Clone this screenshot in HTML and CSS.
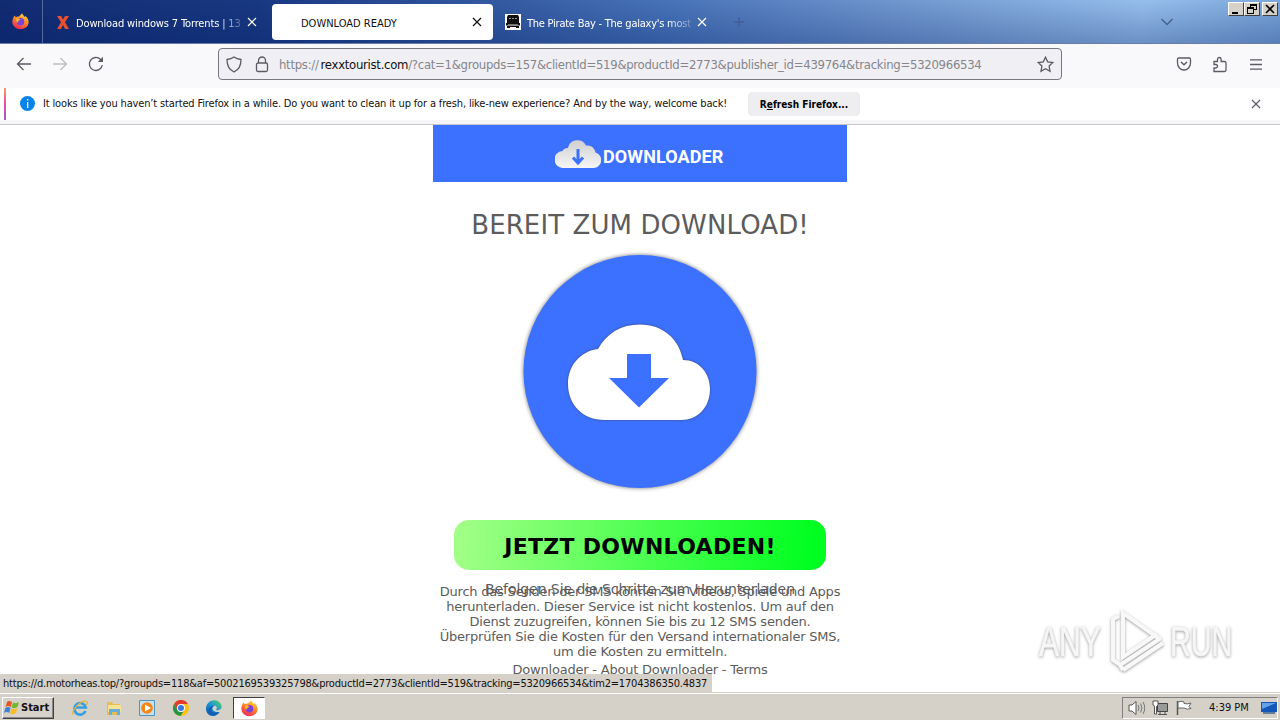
FILE: index.html
```html
<!DOCTYPE html>
<html lang="de">
<head>
<meta charset="utf-8">
<title>DOWNLOAD READY</title>
<link rel="stylesheet" href="styles.css">
</head>
<body>
<svg class="defs" width="0" height="0">
  <defs>
    <linearGradient id="fire" x1=".8" y1="0" x2=".3" y2="1"><stop offset="0" stop-color="#ffe14a"/><stop offset=".45" stop-color="#ff8a22"/><stop offset="1" stop-color="#f0245c"/></linearGradient>
    <linearGradient id="edge" x1="0" y1="1" x2="1" y2="0"><stop offset="0" stop-color="#0c50a8"/><stop offset=".5" stop-color="#1994d8"/><stop offset="1" stop-color="#5ad65c"/></linearGradient>
    <linearGradient id="silver" x1="0" y1="0" x2="0" y2="1"><stop offset="0" stop-color="#cfcfcf"/><stop offset="1" stop-color="#f6f6f6"/></linearGradient>
    <symbol id="firefox" viewBox="0 0 16 16"><path fill="url(#fire)" d="M2.2 2.4 3.7 4C4.4 3.4 5.2 3.2 6 3.5 7 3 7.800 1.800 9.600.2 10 1.800 11.300 2.600 12.100 3.800L12.700 2.800C14.700 4.600 15.900 6.600 15.600 9.300A7.700 6.900 0 0 1 .3 9C.2 6.500 1 4.600 2.200 2.400Z"/><circle cx="8" cy="8.200" r="3.500" fill="#7b42d6"/><path fill="#ffb22b" d="M3.700 5.300C5.200 4.300 7 5 7.900 6.300L6.200 7.400 5.500 9C4.300 8.300 3.400 6.900 3.700 5.300Z"/></symbol>
    <symbol id="x" viewBox="0 0 10 10"><path d="m1 1 8 8M9 1 1 9" fill="none" stroke="currentColor" stroke-width="1.200"/></symbol>
  </defs>
</svg>

<header class="tabs">
  <div class="view"><svg width="17" height="17"><use href="#firefox"/></svg></div>
  <div class="tab tab-a">
    <svg width="12" height="13" viewBox="0 0 12 13"><path d="M0 0h4.200L6 3.600 8 0h4L8 6.300 12 13H8L6 9l-2 4H0l4-6.700Z" fill="#e8502c"/></svg>
    <span class="tab-title fade t1">Download windows 7 Torrents | 13</span>
    <svg class="close" width="10" height="10"><use href="#x"/></svg>
  </div>
  <div class="tab tab-b">
    <span class="tab-title t2">DOWNLOAD READY</span>
    <svg class="close" width="10" height="10"><use href="#x"/></svg>
  </div>
  <div class="tab tab-c">
    <svg width="16" height="16" viewBox="0 0 16 16"><path fill="#fff" d="M0 0h16v16H0z"/><path d="M3 1h10l1 2v6H2V3ZM1 9h14v2.500H1zM2 12h3v2H2zM11 12h3v2h-3zM5 12h6v1H5z" fill="#111"/><path d="M4 4h2v1H4zm3 0h2v1H7zm3 0h2v1h-2zM3 10h10v.7H3z" fill="#999"/></svg>
    <span class="tab-title fade t3">The Pirate Bay - The galaxy's most</span>
    <svg class="close" width="10" height="10"><use href="#x"/></svg>
  </div>
  <svg class="plus" width="10" height="10"><path d="M5 0v10M0 5h10" stroke="#405783"/></svg>
  <svg class="chev" width="12" height="8"><path d="m.5 1 5.500 5.500L11.500 1" fill="none" stroke="#42618f" stroke-width="1.300"/></svg>
  <div class="winbtns">
    <svg width="16" height="14" class="wb"><path d="M4 10h6v2H4z"/></svg>
    <svg width="16" height="14" class="wb"><path d="M6 2h7v6h-3v4H3V5h3zm1 2v1h3v2h2V4zM4 7v4h5V7z" fill-rule="evenodd"/></svg>
    <svg width="16" height="14" class="wb last"><path d="m4 3 8 8M12 3l-8 8" stroke="#000" stroke-width="1.700"/></svg>
  </div>
</header>

<nav class="bar">
  <svg class="back" width="16" height="14" viewBox="0 0 16 14"><path d="M7.500 1 1.500 7l6 6M1.500 7H15"/></svg>
  <svg class="fwd" width="16" height="14" viewBox="0 0 16 14"><path d="m8.500 1 6 6-6 6M14.500 7H1"/></svg>
  <svg class="reload" width="16" height="16" viewBox="0 0 16 16"><path d="M14.300 9A6.500 6.500 0 1 1 12.600 3.500L14 5"/><path d="M15 .8V6H9.800Z" fill="#5b5b66" stroke="none"/></svg>
  <div class="url">
    <svg width="16" height="17" viewBox="0 0 16 17"><path d="M8 1c2 1.500 4.200 2.200 7 2.500.1 5.500-1.800 10-7 12.500C2.800 13.500.9 9 1 3.500 3.800 3.200 6 2.500 8 1Z"/></svg>
    <svg class="lock" width="14" height="17" viewBox="0 0 14 17"><rect x="1.500" y="7" width="11" height="8.500" rx="1.500"/><path d="M3.500 7V4.500a3.500 3.500 0 0 1 7 0V7"/></svg>
    <span class="address">https://<b>rexxtourist.com</b>/?cat=1&amp;groupds=157&amp;clientId=519&amp;productId=2773&amp;publisher_id=439764&amp;tracking=5320966534</span>
    <svg class="star" width="17" height="17" viewBox="0 0 17 17"><path d="m8.500 1.200 2.200 4.700 5.100.6-3.700 3.600.9 5.200-4.500-2.500L4 15.300l.9-5.200L1.200 6.500l5.100-.6Z"/></svg>
  </div>
  <svg class="pocket" width="16" height="14" viewBox="0 0 16 14"><path d="M2.500 1h11Q14.500 1 14.500 2.500V6A6.500 7 0 0 1 1.500 6V2.500Q1.500 1 2.500 1Z"/><path d="m5 5 3 2.800L11 5" stroke-width="1.500"/></svg>
  <svg class="ext" width="16" height="17" viewBox="0 0 16 17"><path d="M2 5.500h3.500V3.300a1.800 1.800 0 0 1 3.600 0v2.200h3.400q1.500 0 1.500 1.500v7q0 1.500-1.500 1.500H2v-3.500h1.800a1.700 1.700 0 0 0 0-3.500H2Z"/></svg>
  <svg class="menu" width="12" height="11"><path d="M0 .8h12M0 5.500h12M0 10.200h12"/></svg>
</nav>

<section class="notice">
  <svg class="info" width="15" height="15"><circle cx="7.500" cy="7.500" r="7.500" fill="#0a84e8"/><path d="M7 3h1.300v1.500H7zM7 6h1.300v6H7z" fill="#fff"/></svg>
  <span class="msg">It looks like you haven’t started Firefox in a while. Do you want to clean it up for a fresh, like-new experience? And by the way, welcome back!</span>
  <button class="refresh"><span>R<u>e</u>fresh Firefox...</span></button>
  <svg class="dismiss" width="10" height="10"><use href="#x"/></svg>
</section>

<main class="page">
  <div class="banner">
    <svg width="46" height="28" viewBox="0 0 46 28"><path d="M8.500 28a8.500 8.500 0 0 1-1-17Q9 8 13 8A9.600 9.600 0 0 1 31 5.500Q38.500 4.500 40.500 12.500A7.900 7.900 0 0 1 38.500 28Z" fill="url(#silver)"/><path d="M23 9v14m-5-5.500 5 5.500 5-5.500" fill="none" stroke="#3c70ff" stroke-width="3"/></svg>
    <span>DOWNLOADER</span>
  </div>
  <h1><span>BEREIT ZUM DOWNLOAD!</span></h1>
  <svg class="circle" width="244" height="244" viewBox="518 250 244 244"><circle cx="640" cy="371.500" r="116.500" fill="#3c70ff"/><path class="cloud" d="M605 420C582 420 568 404 568 384C568 365 581 351 598 349C607 333 621 324.500 640 324.500C663 324.500 679 339 683 360C699 360 710 373 710 389C710 407 698 420 681 420Z"/><path d="M627 354h24v24h18l-30 29.500-30-29.500h18Z" fill="#3c70ff"/></svg>
  <button class="download"><span>JETZT DOWNLOADEN!</span></button>
  <p class="steps"><span>Befolgen Sie die Schritte zum Herunterladen</span></p>
  <p class="terms">Durch das Senden der SMS können Sie Videos, Spiele und Apps<br>herunterladen. Dieser Service ist nicht kostenlos. Um auf den<br>Dienst zuzugreifen, können Sie bis zu 12 SMS senden.<br>Überprüfen Sie die Kosten für den Versand internationaler SMS,<br>um die Kosten zu ermitteln.</p>
  <p class="links">Downloader - About Downloader - Terms</p>
  <div class="watermark">
    <span class="wm">ANY</span>
    <svg width="58" height="66" viewBox="0 0 58 66"><path d="M10 8 4 11v41l6 4M52 32 14 5v44l34-23M14 62l40-27M14 62l-3-5 38-25" /></svg>
    <span class="wm run">RUN</span>
  </div>
  <div class="status"><span>https://d.motorheas.top/?groupds=118&amp;af=5002169539325798&amp;productId=2773&amp;clientId=519&amp;tracking=5320966534&amp;tim2=1704386350.4837</span></div>
</main>

<footer class="taskbar">
  <div class="start"><svg width="16" height="15" viewBox="0 0 16 15"><path d="M3 2Q5 0 8 2L6.800 7Q4 5 1.600 7Z" fill="#e85424"/><path d="M9 2.500q3 1.500 6-.5l-1.500 5q-3 2-6 .5Z" fill="#72b632"/><path d="M1.300 8Q4 6 6.500 8l-1.300 5Q3 11 0 13Z" fill="#3c82d6"/><path d="M7.300 8.500q3 1.500 6-.5L12 13q-3 2-6 .5Z" fill="#f8bc26"/></svg><span>Start</span></div>
  <div class="launch">
    <svg width="16" height="16" viewBox="0 0 16 16"><path d="M13.500 11a5.800 5.800 0 1 1 .3-3.500H4" fill="none" stroke="#369fe0" stroke-width="2.600"/><path d="M1 14.500C-1 11 10-2 15 2q1 1-.5 3" fill="none" stroke="#e7b43b" stroke-width="1.200"/></svg>
    <svg width="16" height="16" viewBox="0 0 16 16"><path d="M1 2h5l1 2h7v11H1z" fill="#e6bd55"/><path d="M2 5h13v7H2z" fill="#f8e394"/><path d="M3 15V9h11v6h-3v-3H6v3Z" fill="#69add8"/></svg>
    <svg width="16" height="16" viewBox="0 0 16 16"><path d="M.5.5h15v15H.5z" fill="#c6e1ee" stroke="#5095bb"/><circle cx="8" cy="8" r="5.800" fill="#f28514"/><path d="m6 4.500 6 3.500-6 3.500Z" fill="#fff"/></svg>
    <svg width="16" height="16" viewBox="0 0 16 16"><circle cx="8" cy="8" r="8" fill="#fbc116"/><path d="M1 4A8 8 0 0 1 15 4H8a4 4 0 0 0-3.500 6Z" fill="#e33b2e"/><path d="M1 4a8 8 0 0 0 6.500 12l3.500-5.500a4 4 0 0 1-6.500-.5Z" fill="#269447"/><circle cx="8" cy="8" r="3.900" fill="#fff"/><circle cx="8" cy="8" r="3" fill="#3478e5"/></svg>
    <svg width="16" height="16" viewBox="0 0 16 16"><path d="M0 9C0-1 13-3 15.500 5.500 16.500 9 13 11 10 10q2-3-1-4.500C5 5 5 13 13.500 12 9 19 0 16 0 9Z" fill="url(#edge)"/><path d="M6 8q-3 6 7.500 4C9 19 0 15 3 8q2-3 6-2.500Q7 6 6 8Z" fill="#1260b4"/></svg>
    <div class="active"><svg width="17" height="17"><use href="#firefox"/></svg></div>
  </div>
  <div class="tray">
    <svg width="17" height="14" viewBox="0 0 17 14"><path d="M1 4h3l4-3.500v13L4 10H1Z" fill="#fff" stroke="#555"/><path d="M10 4q2 3 0 6M12.500 2.500q3 4.500 0 9M15 1q3.500 6 0 12" fill="none" stroke="#777"/></svg>
    <svg width="17" height="16" viewBox="0 0 17 16"><path d="M5.500 3.500h10v8h-10z" fill="#999" stroke="#444"/><path d="M8 11.500v3M13 11.500v3M6 14.500h9" stroke="#555"/><path d="M1 1h5v4L4.500 6.500V14h-2V6L1 5Z" fill="#fff" stroke="#555"/></svg>
    <svg width="17" height="16" viewBox="0 0 17 16"><path d="M1.500 1v14" stroke="#555" stroke-width="1.500"/><path d="M2 2q3-1.500 6 0v1.500q3 1 7-.5l-2 3.500 2 2q-4 1.500-7-.5H2Z" fill="#fff" stroke="#666"/></svg>
    <span class="clock">4:39 PM</span>
    <svg class="desk" width="16" height="13"><path d="M0 1h16v10H0z" fill="#1557b9"/><path d="M1 2h14L1 8Z" fill="#65a2e8"/><path d="M2 11h12v2H2z" fill="#647b9a"/></svg>
  </div>
</footer>
</body>
</html>
```
FILE: styles.css
```css
* { box-sizing: border-box; }
html, body { height: 100%; }
body { margin: 0; display: flex; flex-direction: column; overflow: hidden; background: #fff; color: #111; font: 11px/14px "DejaVu Sans Condensed", "DejaVu Sans", sans-serif; font-stretch: condensed; }
svg { display: block; flex: none; }
.defs { position: absolute; }
span { white-space: nowrap; }

.tabs { height: 44px; flex: none; display: flex; color: #fff; border-bottom: 1px solid #687fa8; background: linear-gradient(to bottom, rgba(130,170,225,.06) 0, rgba(15,45,115,.32) 100%), linear-gradient(100deg, #0b246b 0, #12317b 20%, #4470b6 52%, #6c92cb 68%, #98c0ec 89%, #79a5da 100%); }
.view { width: 43px; padding: 13px 0 0 12px; border-right: 1px solid #53699d; }
.tab { display: flex; align-items: center; height: 36px; margin-top: 4px; }
.tab-title { padding-top: 3px; }
.fade { -webkit-mask-image: linear-gradient(to right, #000 86%, rgba(0,0,0,.25)); mask-image: linear-gradient(to right, #000 86%, rgba(0,0,0,.25)); }
.tab .close { margin-left: auto; }
.tab-a { width: 229px; padding: 0 15px 0 14px; gap: 5px; }
.tab-a .tab-title { margin-left: 2px; }
.tab-b { width: 221px; padding: 0 11px 0 29px; background: #fff; color: #111; border-radius: 4px; }
.tab-c { width: 227px; padding: 0 13px 0 12px; gap: 6px; }
.t1 { letter-spacing: -.14px; }
.t3 { letter-spacing: -.24px; }
.plus { margin: 17px 0 0 14px; }
.chev { margin: 18px 0 0 auto; }
.winbtns { display: flex; width: 107px; padding: 2px 2px 0 55px; }
.wb { background: #d5d0c8; border: 1px solid; border-color: #fff #404040 #404040 #fff; overflow: hidden; }
.wb path { transform: translate(-1px, -1px); }
.wb.last { margin-left: 2px; }

.bar { height: 44px; flex: none; display: flex; align-items: center; padding: 0 18px 4px 16px; background: #f9f9fb; }
.bar svg { fill: none; stroke: #5b5b66; stroke-width: 1.300; }
.bar .fwd { margin-left: 20px; stroke: #bdbdc4; }
.reload { margin-left: 20px; }
.url { width: 844px; height: 32px; margin-left: 114px; padding: 0 7px; display: flex; align-items: center; border: 1px solid #77777f; border-radius: 4px; background: #f0f0f4; }
.lock { margin-left: 13px; }
.address { margin-left: 10px; padding-top: 1px; color: #85858b; font-size: 13px; letter-spacing: -.29px; }
.address b { margin-left: 2px; font-weight: 400; color: #111; }
.star { margin-left: auto; }
.pocket { margin-left: 114px; }
.ext { margin-left: 20px; }
.menu { margin-left: 22px; }

.notice { height: 37px; flex: none; display: flex; padding: 0 19px 0 20px; position: relative; background: #fff; border-bottom: 1px solid #c8c8ca; box-shadow: inset 0 -4px #f5f5f7; }
.notice::before { content: ""; position: absolute; left: 4px; top: 0; width: 2px; height: 32px; background: linear-gradient(#ff9a64, #e94aa0, #a05bd0); }
.info { margin-top: 8px; }
.msg { margin: 9px 0 0 8px; width: 705px; letter-spacing: -.148px; }
.refresh { width: 112px; height: 24px; margin-top: 4px; padding: 1px 0 0; border: 0; border-radius: 4px; background: #eeeef0; font: bold 10px/23px "DejaVu Sans Condensed", "DejaVu Sans", sans-serif; }
.dismiss { margin: 11px 0 0 auto; color: #5b5b66; }

.page { flex: 1; min-height: 0; position: relative; overflow: hidden; display: flex; flex-direction: column; align-items: center; color: #5c5c5c; font-family: "DejaVu Sans", sans-serif; font-stretch: normal; }
.banner { width: 414px; height: 57px; flex: none; display: flex; align-items: center; padding-left: 122px; gap: 2px; background: #3c70ff; }
.banner span { color: #fff; font: bold 18px/22px Roboto, sans-serif; padding-top: 6px; letter-spacing: .1px; }
h1 { margin: 25px 0 0; font-weight: 400; font-size: 26px; line-height: 36px; letter-spacing: .1px; }
.circle { margin-top: 7px; filter: drop-shadow(0 0 2px rgba(0,0,0,.55)); }
.cloud { fill: #fff; filter: drop-shadow(0 0 1px rgba(60,60,60,.8)); }
.download { width: 372px; height: 50px; flex: none; margin-top: 26px; border: 0; padding: 3px 0 0; border-radius: 15px; background: linear-gradient(95deg, #a4ff88, #00ff20 96%); color: #000; font: bold 22px/47px "DejaVu Sans", sans-serif; letter-spacing: .3px; }
p { margin: 0; flex: none; text-align: center; white-space: nowrap; font-size: 13px; line-height: 15px; letter-spacing: -.21px; }
.steps { height: 4px; margin-top: 10px; font-size: 14px; line-height: 18px; letter-spacing: -.07px; }
.links { margin-top: 3px; }
.watermark { position: absolute; left: 1039px; top: 483px; display: flex; align-items: center; filter: drop-shadow(0 1px 1.500px rgba(0,0,0,.38)); }
.wm { font: 43px/50px "Liberation Sans", sans-serif; color: #f6f6f6; width: 64px; transform-origin: 0 50%; transform: scaleX(.7); -webkit-text-stroke: .6px #f6f6f6; }
.wm.run { transform: scaleX(.67); }
.watermark svg { margin: 0 3px 0 6px; fill: none; stroke: #f8f8f8; stroke-width: 4; }
.status { position: absolute; left: 0; bottom: 0; width: 712px; height: 18px; padding: 3px 3px 1px; background: #d5d0c8; color: #111; font-family: "DejaVu Sans Condensed", "DejaVu Sans", sans-serif; font-stretch: condensed; letter-spacing: -.195px; }

.taskbar { height: 28px; flex: none; display: flex; align-items: center; padding: 2px 2px 0; background: #d5d0c8; border-top: 1px solid #d5d0c8; box-shadow: inset 0 1px #fff; }
.start { width: 52px; height: 22px; display: flex; align-items: center; gap: 1px; padding-left: 1px; border: 1px solid; border-color: #fff #404040 #404040 #fff; box-shadow: inset -1px -1px #888; font-weight: 700; }
.launch { display: flex; align-items: center; gap: 17.500px; margin-left: 18px; }
.active { width: 32px; height: 22px; margin-left: -7px; padding: 2px 0 0 7px; background: #fff; border: 1px solid; border-color: #404040 #fff #fff #404040; }
.tray { width: 156px; height: 22px; margin-left: auto; display: flex; align-items: center; padding-left: 5px; gap: 7px; border: 1px solid; border-color: #808080 #fff #fff #808080; }
.clock { margin-left: 9px; }
.desk { margin-left: 5px; }
```
